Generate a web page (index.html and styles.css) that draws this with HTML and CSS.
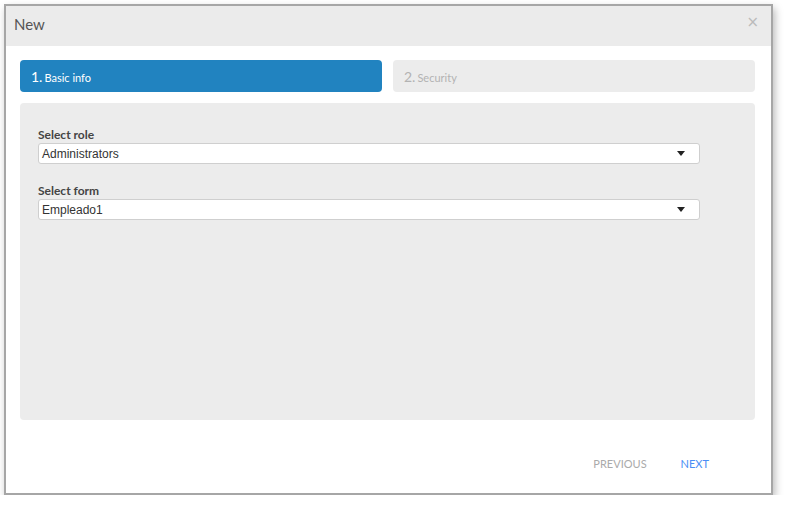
FILE: index.html
```html
<!DOCTYPE html>
<html>
<head>
<meta charset="utf-8">
<link rel="stylesheet" href="styles.css">
</head>
<body>
<div class="dialog">
  <div class="dialog-header">
    <span class="title">New</span>
    <span class="close">&times;</span>
  </div>
  <div class="dialog-body">
    <div class="steps">
      <div class="step active"><span class="num">1.</span><span class="step-label">Basic info</span></div>
      <div class="step"><span class="num">2.</span><span class="step-label">Security</span></div>
    </div>
    <div class="panel">
      <div class="field">
        <label class="field-label">Select role</label>
        <div class="select"><span>Administrators</span><span class="caret"></span></div>
      </div>
      <div class="field">
        <label class="field-label">Select form</label>
        <div class="select"><span>Empleado1</span><span class="caret"></span></div>
      </div>
    </div>
  </div>
  <div class="dialog-footer">
    <span class="btn btn-prev">PREVIOUS</span>
    <span class="btn btn-next">NEXT</span>
  </div>
</div>
</body>
</html>
```
FILE: styles.css
```css
html, body {
  margin: 0;
  padding: 0;
  background: #ffffff;
}
body {
  padding: 4px 0 0 4px;
  font-family: Lato, "Open Sans", sans-serif;
}
.dialog {
  width: 765px;
  height: 487px;
  border: 2px solid #a6a6a6;
  background: #ffffff;
  box-shadow: 2px 4px 8px rgba(0, 0, 0, 0.28);
  display: flex;
  flex-direction: column;
}
.dialog-header {
  height: 40px;
  background: #ebebeb;
  display: flex;
  align-items: center;
  justify-content: space-between;
  padding: 0 12px 0 8px;
}
.title {
  font-size: 15px;
  color: #555555;
  margin-top: -5px;
}
.close {
  font-size: 15px;
  color: #bbbbbb;
  font-family: "DejaVu Sans", sans-serif;
  margin-top: -9px;
}
.dialog-body {
  padding: 14px 16px 0 14px;
}
.steps {
  display: flex;
  gap: 11px;
}
.step {
  flex: 1;
  height: 32px;
  border-radius: 4px;
  background: #ececec;
  color: #b3b3b3;
  display: flex;
  align-items: center;
  padding-left: 11px;
  box-sizing: border-box;
}
.step.active {
  background: #2183c0;
  color: #ffffff;
}
.num {
  font-size: 14px;
  margin-right: 2px;
}
.step-label {
  font-size: 11px;
  padding-top: 2px;
}
.panel {
  margin-top: 11px;
  height: 317px;
  background: #ececec;
  border-radius: 4px;
  padding: 24px 0 0 18px;
  box-sizing: border-box;
  display: flex;
  flex-direction: column;
  gap: 19px;
}
.field {
  display: flex;
  flex-direction: column;
}
.field-label {
  font-size: 12px;
  font-weight: bold;
  color: #444444;
  line-height: 16px;
}
.select {
  width: 662px;
  height: 21px;
  box-sizing: border-box;
  background: #ffffff;
  border: 1px solid #cfcfcf;
  border-radius: 3px;
  display: flex;
  align-items: center;
  justify-content: space-between;
  padding: 0 14px 0 3px;
  font-family: "Liberation Sans", Arial, sans-serif;
  font-size: 12px;
  color: #333333;
}
.caret {
  width: 0;
  height: 0;
  border-left: 4px solid transparent;
  border-right: 4px solid transparent;
  border-top: 5px solid #222222;
}
.dialog-footer {
  flex: 1;
  display: flex;
  justify-content: flex-end;
  align-items: center;
  padding: 13px 62px 0 0;
  gap: 34px;
}
.btn {
  font-size: 11px;
}
.btn-prev {
  color: #aaaaaa;
}
.btn-next {
  color: #4a8ef5;
}
```
